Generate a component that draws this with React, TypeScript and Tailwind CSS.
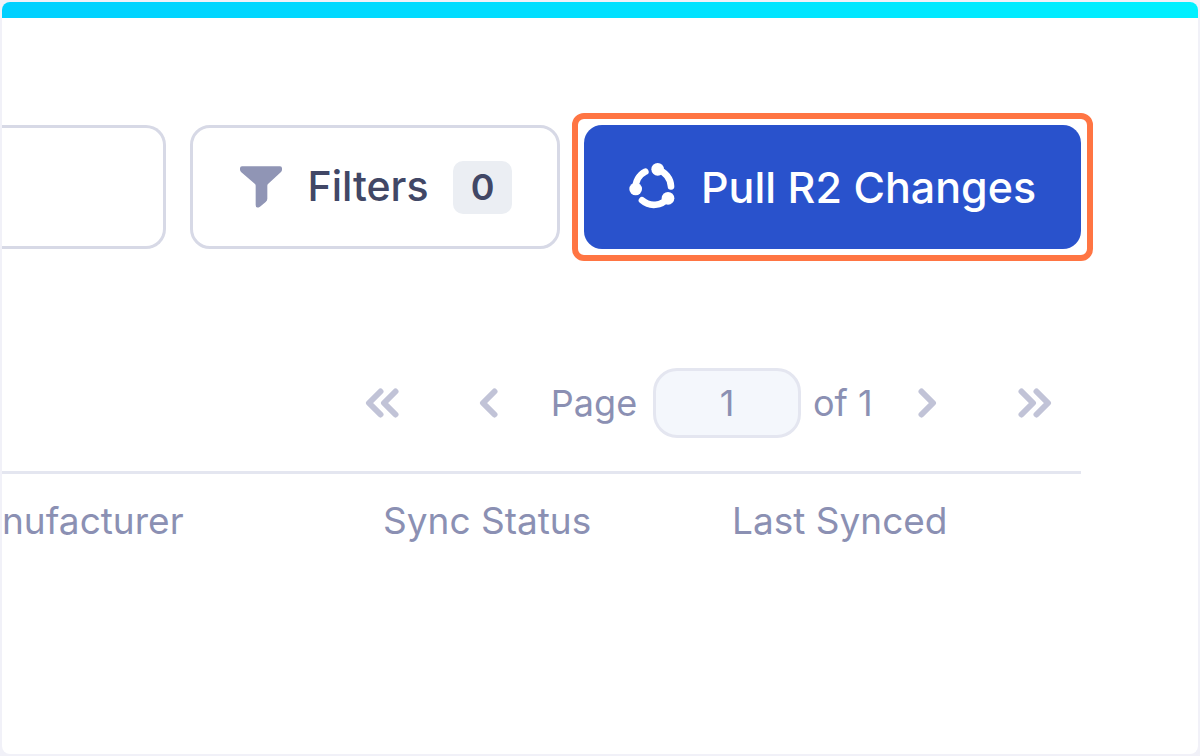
function FunnelIcon() {
  return (
    <svg width="42" height="42" viewBox="178 168 126 126" fill="#9095b5" aria-hidden="true">
      <path d="M184 169H298Q304 169 304 175V179Q304 183 301 186L262 222Q260 224 260 227V266Q260 272 255 276L238 290Q225 297 225 285V227Q225 224 223 222L182 187Q178 183 178 179V175Q178 169 184 169Z" />
    </svg>
  );
}

function SyncIcon() {
  return (
    <svg width="48" height="48" viewBox="57 54 144 144" fill="none" stroke="#fff" strokeWidth="20" strokeLinecap="round" aria-hidden="true">
      <path d="M143 74A54 54 0 0 1 183 124" />
      <path d="M174 159A54 54 0 0 1 96 166" />
      <path d="M77 131A54 54 0 0 1 106 80" />
      <g fill="#fff" stroke="none">
        <circle cx="143" cy="73" r="19" />
        <circle cx="77" cy="132" r="19" />
        <circle cx="174" cy="160" r="19" />
      </g>
    </svg>
  );
}

type ChevronProps = { label: string; double?: boolean; flip?: boolean };

function ChevronButton({ label, double, flip }: ChevronProps) {
  return (
    <button type="button" aria-label={label} className="shrink-0 text-[#c1c3d7]">
      <svg
        width={double ? 34 : 20}
        height="30"
        viewBox={double ? "0 0 34 30" : "0 0 20 30"}
        fill="none"
        stroke="currentColor"
        strokeWidth="6"
        strokeLinecap="round"
        strokeLinejoin="round"
        className={flip ? "rotate-180" : ""}
      >
        <path d="M15.500 3.500L4 15L15.500 26.500" />
        {double && <path d="M30.500 3.500L19 15L30.500 26.500" />}
      </svg>
    </button>
  );
}

export default function App() {
  return (
    <div className="min-h-screen flex flex-col bg-[#f1f1f8] p-0.5 font-['Inter','Liberation_Sans',sans-serif]">
      <div className="flex-1 rounded-lg overflow-hidden bg-white">
        <div className="h-4 bg-linear-to-r from-[#00d0ff] to-[#00f0ff]" />

        <main className="pr-[117px]">
          {/* Toolbar */}
          <div className="flex gap-6 pt-[107px]">
            <input
              type="search"
              aria-label="Search"
              className="flex-1 min-w-0 h-[124px] border-3 border-l-0 border-[#d7d9e6] rounded-r-[20px] bg-white px-6 text-4xl outline-none"
            />
            <button
              type="button"
              className="flex items-center w-[370px] h-[124px] shrink-0 border-3 border-[#d7d9e6] rounded-[20px] pl-[47px] text-[41px] font-medium text-[#414766]"
            >
              <FunnelIcon />
              <span className="ml-6 w-[124px] text-center">Filters</span>
              <span className="ml-[23px] flex items-center justify-center w-[59px] h-[53px] rounded-[10px] bg-[#ebeef3] text-4xl font-semibold">
                0
              </span>
            </button>
            <div className="relative shrink-0">
              <button
                type="button"
                className="flex items-center gap-6 w-[497px] h-[124px] rounded-[18px] bg-[#2952cc] pl-[45px] text-[43px] font-medium text-white whitespace-nowrap"
              >
                <SyncIcon />
                Pull R2 Changes
              </button>
              <div className="absolute -inset-3 border-6 border-[#ff7543] rounded-xl pointer-events-none" />
            </div>
          </div>

          {/* Pagination */}
          <nav aria-label="Pagination" className="flex items-center justify-end pt-[119px] pb-[33px] pr-[29px] text-4xl text-[#8b90b3]">
            <ChevronButton label="First page" double />
            <div className="ml-20 flex">
              <ChevronButton label="Previous page" />
            </div>
            <label htmlFor="page" className="ml-12 w-[94px] text-center">Page</label>
            <input
              id="page"
              type="text"
              defaultValue="1"
              className="ml-3 w-[148px] h-[70px] border-3 border-[#e4e6f0] rounded-3xl bg-[#f4f7fc] text-center outline-none"
            />
            <span className="ml-3 w-[56px] whitespace-nowrap">of 1</span>
            <div className="ml-12 flex">
              <ChevronButton label="Next page" flip />
            </div>
            <div className="ml-[81px] flex">
              <ChevronButton label="Last page" double flip />
            </div>
          </nav>

          {/* Device table */}
          <table className="w-full table-fixed border-t-3 border-[#e4e6f0] text-[37px] leading-10 text-[#8b90b3]">
            <thead>
              <tr className="text-left whitespace-nowrap">
                <th scope="col" className="w-[381px] pt-[27px] font-normal">nufacturer</th>
                <th scope="col" className="w-[349px] pt-[27px] font-normal">Sync Status</th>
                <th scope="col" className="pt-[27px] font-normal">Last Synced</th>
              </tr>
            </thead>
          </table>
        </main>
      </div>
    </div>
  );
}
